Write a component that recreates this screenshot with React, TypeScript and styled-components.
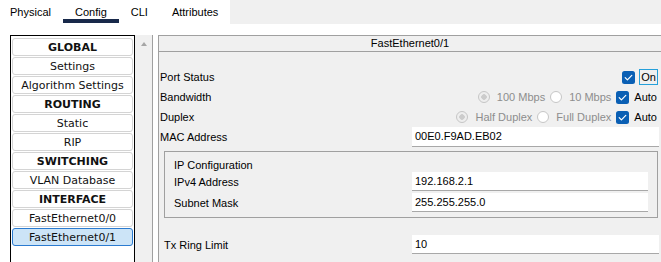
import { FC } from "react";
import styled, { createGlobalStyle } from "styled-components";

const NAV_ITEMS = [
  { label: "GLOBAL", heading: true },
  { label: "Settings" },
  { label: "Algorithm Settings" },
  { label: "ROUTING", heading: true },
  { label: "Static" },
  { label: "RIP" },
  { label: "SWITCHING", heading: true },
  { label: "VLAN Database" },
  { label: "INTERFACE", heading: true },
  { label: "FastEthernet0/0" },
  { label: "FastEthernet0/1", selected: true },
];

const TABS = ["Physical", "Config", "CLI", "Attributes"];

const GlobalStyle = createGlobalStyle`
  html, body {
    margin: 0;
    padding: 0;
    background: #ffffff;
  }
  body {
    font-family: "Liberation Sans", Arial, sans-serif;
    font-size: 11px;
    color: #000;
  }
`;

const CheckMark: FC = () => (
  <svg width="13" height="13" viewBox="0 0 13 13">
    <rect x="0" y="0" width="13" height="13" rx="2.5" fill="#0a5fb4" />
    <path
      d="M3.2 6.6 L5.4 8.8 L9.8 4.4"
      fill="none"
      stroke="#ffffff"
      strokeWidth="1.2"
      strokeLinecap="round"
      strokeLinejoin="round"
    />
  </svg>
);

const App: FC = () => {
  return (
    <>
      <GlobalStyle />
      <Window>
        <TabBar>
          <TabStrip>
            {TABS.map((tab, i) => (
              <Tab key={tab} $active={tab === "Config"} $first={i === 0}>
                {tab}
              </Tab>
            ))}
          </TabStrip>
          <TabFiller />
        </TabBar>

        <Workspace>
          <NavPane>
            <NavList>
              {NAV_ITEMS.map((item) => (
                <NavButton
                  key={item.label}
                  $heading={item.heading}
                  $selected={item.selected}
                >
                  {item.label}
                </NavButton>
              ))}
            </NavList>
            <ScrollTrack>
              <ArrowUp />
            </ScrollTrack>
          </NavPane>

          <ConfigPanel>
            <PanelHeader>FastEthernet0/1</PanelHeader>
            <Form>
              <Row>
                <Label>Port Status</Label>
                <Controls>
                  <CheckMark />
                  <FocusLabel>On</FocusLabel>
                </Controls>
              </Row>
              <Row>
                <Label>Bandwidth</Label>
                <Controls>
                  <Radio $checked />
                  <DisabledText>100 Mbps</DisabledText>
                  <Radio />
                  <DisabledText>10 Mbps</DisabledText>
                  <CheckMark />
                  <OptionText>Auto</OptionText>
                </Controls>
              </Row>
              <Row>
                <Label>Duplex</Label>
                <Controls>
                  <Radio $checked />
                  <DisabledText>Half Duplex</DisabledText>
                  <Radio />
                  <DisabledText>Full Duplex</DisabledText>
                  <CheckMark />
                  <OptionText>Auto</OptionText>
                </Controls>
              </Row>
              <Row>
                <Label>MAC Address</Label>
                <Field>00E0.F9AD.EB02</Field>
              </Row>

              <Group>
                <GroupTitle>IP Configuration</GroupTitle>
                <GroupRow>
                  <Label>IPv4 Address</Label>
                  <Field $short>192.168.2.1</Field>
                </GroupRow>
                <GroupRow>
                  <Label>Subnet Mask</Label>
                  <Field $short>255.255.255.0</Field>
                </GroupRow>
              </Group>

              <TxRow>
                <Label>Tx Ring Limit</Label>
                <Field $short>10</Field>
              </TxRow>
            </Form>
          </ConfigPanel>
        </Workspace>
      </Window>
    </>
  );
};

const Window = styled.div`
  width: 661px;
  height: 262px;
  overflow: hidden;
  background: #ffffff;
`;

const TabBar = styled.div`
  display: flex;
  height: 25px;
`;

const TabStrip = styled.div`
  display: flex;
  background: #ffffff;
`;

const Tab = styled.div<{ $active?: boolean; $first?: boolean }>`
  padding: 0 12px 0 ${(p) => (p.$first ? "10px" : "12px")};
  height: 23px;
  line-height: 24px;
  font-size: 11px;
  color: #000;
  border-bottom: 4px solid ${(p) => (p.$active ? "#18294a" : "transparent")};
  box-sizing: border-box;
`;

const TabFiller = styled.div`
  flex: 1;
  height: 24px;
  background: #f0f0f0;
`;

const Workspace = styled.div`
  display: flex;
  padding: 10px 0 0 10px;
  height: 240px;
`;

const NavPane = styled.div`
  display: flex;
  height: 260px;
`;

const NavList = styled.div`
  width: 125px;
  box-sizing: border-box;
  border: 1px solid #000;
  border-bottom: none;
  padding: 2px 1px 0;
  display: flex;
  flex-direction: column;
  gap: 1px;
  background: #ffffff;
`;

const NavButton = styled.div<{ $heading?: boolean; $selected?: boolean }>`
  height: 18px;
  box-sizing: border-box;
  border: 1px solid ${(p) => (p.$selected ? "#2b7bd0" : "#d4d4d4")};
  border-radius: 3px;
  background: ${(p) => (p.$selected ? "#cce4f7" : "#ffffff")};
  font-family: "DejaVu Sans", Verdana, sans-serif;
  font-size: 11px;
  font-weight: ${(p) => (p.$heading ? 700 : 400)};
  line-height: 17px;
  text-align: center;
  color: #111;
  white-space: nowrap;
`;

const ScrollTrack = styled.div`
  width: 18px;
  box-sizing: border-box;
  background: #f0f0f0;
  border-right: 1px solid #a0a0a0;
  display: flex;
  justify-content: center;
  padding-top: 7px;
`;

const ArrowUp = styled.div`
  width: 0;
  height: 0;
  border-left: 3.5px solid transparent;
  border-right: 3.5px solid transparent;
  border-bottom: 4px solid #a6a6a6;
`;

const ConfigPanel = styled.div`
  flex: 1;
  margin-left: 5px;
  background: #f0f0f0;
  border-left: 1px solid #a0a0a0;
  border-top: 1px solid #a0a0a0;
  display: flex;
  flex-direction: column;
`;

const PanelHeader = styled.div`
  height: 15px;
  line-height: 14px;
  text-align: center;
  border-bottom: 1px solid #a0a0a0;
`;

const Form = styled.div`
  padding: 15px 2px 0 1px;
  display: flex;
  flex-direction: column;
`;

const Row = styled.div`
  display: grid;
  grid-template-columns: 252px 1fr;
  align-items: center;
  height: 20px;
`;

const Label = styled.span`
  white-space: nowrap;
`;

const Controls = styled.div`
  display: flex;
  justify-content: flex-end;
  align-items: center;
  padding-right: 1px;

  & > svg + span {
    margin-left: 5px;
  }
`;

const FocusLabel = styled.span`
  && {
    margin-left: 4px;
  }
  border: 1px solid #26a0da;
  height: 16px;
  box-sizing: border-box;
  padding: 0 1px;
  line-height: 14px;
`;

const Radio = styled.span<{ $checked?: boolean }>`
  width: 12px;
  height: 12px;
  box-sizing: border-box;
  border-radius: 50%;
  border: 1px solid #c6c6c6;
  background: ${(p) =>
    p.$checked
      ? "radial-gradient(circle, #cccccc 0 2.5px, #eeeeee 3px)"
      : "#ffffff"};
  margin-right: 7px;
`;

const DisabledText = styled.span`
  color: #8d8d8d;
  margin-right: 5px;
`;

const OptionText = styled.span`
  padding-right: 1px;
`;

const Field = styled.div<{ $short?: boolean }>`
  height: ${(p) => (p.$short ? "19px" : "20px")};
  box-sizing: border-box;
  background: #ffffff;
  border-bottom: 1px solid #a8a8a8;
  padding-left: 3px;
  line-height: 18px;
`;

const Group = styled.div`
  margin: 4px 1px 0 4px;
  border: 1px solid #a0a0a0;
  padding: 5px 9px 5px 9px;
  display: flex;
  flex-direction: column;
`;

const GroupTitle = styled.div`
  height: 15px;
  line-height: 16px;
`;

const GroupRow = styled.div`
  display: grid;
  grid-template-columns: 238px 1fr;
  align-items: center;
  height: 19px;

  & + & {
    margin-top: 2px;
  }
`;

const TxRow = styled.div`
  display: grid;
  grid-template-columns: 248px 1fr;
  align-items: center;
  margin-top: 17px;
  padding-left: 4px;
  height: 19px;
`;

export default App;
